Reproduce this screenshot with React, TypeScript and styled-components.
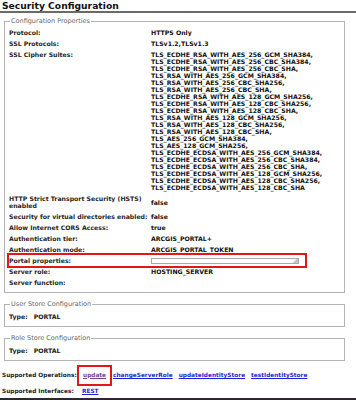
import * as React from 'react';
import styled, { createGlobalStyle } from 'styled-components';

const GlobalStyle = createGlobalStyle`
  html, body {
    margin: 0;
    padding: 0;
    background: #fff;
  }
  body {
    font-family: "DejaVu Sans", Verdana, sans-serif;
    color: #222;
  }
`;

const ciphers = [
  'TLS_ECDHE_RSA_WITH_AES_256_GCM_SHA384,',
  'TLS_ECDHE_RSA_WITH_AES_256_CBC_SHA384,',
  'TLS_ECDHE_RSA_WITH_AES_256_CBC_SHA,',
  'TLS_RSA_WITH_AES_256_GCM_SHA384,',
  'TLS_RSA_WITH_AES_256_CBC_SHA256,',
  'TLS_RSA_WITH_AES_256_CBC_SHA,',
  'TLS_ECDHE_RSA_WITH_AES_128_GCM_SHA256,',
  'TLS_ECDHE_RSA_WITH_AES_128_CBC_SHA256,',
  'TLS_ECDHE_RSA_WITH_AES_128_CBC_SHA,',
  'TLS_RSA_WITH_AES_128_GCM_SHA256,',
  'TLS_RSA_WITH_AES_128_CBC_SHA256,',
  'TLS_RSA_WITH_AES_128_CBC_SHA,',
  'TLS_AES_256_GCM_SHA384,',
  'TLS_AES_128_GCM_SHA256,',
  'TLS_ECDHE_ECDSA_WITH_AES_256_GCM_SHA384,',
  'TLS_ECDHE_ECDSA_WITH_AES_256_CBC_SHA384,',
  'TLS_ECDHE_ECDSA_WITH_AES_256_CBC_SHA,',
  'TLS_ECDHE_ECDSA_WITH_AES_128_GCM_SHA256,',
  'TLS_ECDHE_ECDSA_WITH_AES_128_CBC_SHA256,',
  'TLS_ECDHE_ECDSA_WITH_AES_128_CBC_SHA',
];

const Page = styled.div`
  height: 398px;
  border-bottom: 2px solid #2b2630;
  overflow: hidden;
`;

const Title = styled.h2`
  margin: 0;
  padding: 1px 2px 0;
  font-size: 9.2px;
  line-height: 10px;
  font-weight: bold;
  color: #111;
  border-bottom: 2px solid #6a6a6a;
`;

const Group = styled.fieldset<{ $pt?: number; $mt?: number; $pb?: number }>`
  margin: ${(p) => p.$mt ?? 6}px 0 0 4px;
  width: 341px;
  box-sizing: border-box;
  padding: ${(p) => p.$pt ?? 2}px 0 ${(p) => p.$pb ?? 4}px 4px;
  border: 1px solid #b4b4b4;
  min-width: 0;
`;

const Legend = styled.legend`
  padding: 0 1px;
  margin-left: 1px;
  font-size: 6.5px;
  line-height: 7px;
  color: #666;
`;

const Row = styled.div<{ $mark?: boolean }>`
  display: grid;
  grid-template-columns: 142px 1fr;
  padding: 2px 0;
  font-size: 6.2px;
  line-height: 7px;
  font-weight: bold;
  ${(p) =>
    p.$mark &&
    `
    width: 296px;
    outline: 2px solid #e3161b;
  `}
`;

const Label = styled.div`
  align-self: start;
  color: #262626;
`;

const Value = styled.div`
  align-self: center;
  color: #111;
`;

const PortalBox = styled.div`
  position: relative;
  width: 148px;
  height: 6px;
  border: 1px solid #a9a9a9;
  box-sizing: border-box;
  background: #fff;
`;

const Grip = styled.span`
  position: absolute;
  right: 0;
  top: 0;
  width: 6px;
  height: 4px;
  background: linear-gradient(135deg, #f4f4f4 0%, #f4f4f4 45%, #bdbdbd 55%, #cfcfcf 100%);
`;

const TypeLine = styled.div`
  display: flex;
  gap: 6px;
  padding: 2px 0;
  font-size: 6.2px;
  line-height: 7px;
  font-weight: bold;
`;

const Footer = styled.div`
  margin-top: 3px;
  padding-left: 2px;
  display: flex;
  flex-direction: column;
`;

const FootRow = styled.div`
  display: flex;
  align-items: center;
  height: ${(p: { $h: number }) => p.$h}px;
  font-size: 5.8px;
  line-height: 8px;
  font-weight: bold;
  color: #222;
  white-space: nowrap;
`;

const FootLabel = styled.span`
  width: 76px;
  flex: none;
`;

const Link = styled.a<{ $visited?: boolean; $mark?: boolean; $ml?: number }>`
  color: ${(p) => (p.$visited ? '#7b3f9a' : '#1f1fd6')};
  text-decoration: underline;
  margin-left: ${(p) => p.$ml ?? 0}px;
  margin-right: 6px;
  cursor: pointer;
  ${(p) =>
    p.$mark &&
    `
    display: inline-block;
    padding: 5px 5px 6px 5px;
    outline: 2px solid #e3161b;
    outline-offset: -1px;
    margin-right: 2px;
  `}
`;

function Prop({ label, children, mark }: { label: React.ReactNode; children?: React.ReactNode; mark?: boolean }) {
  return (
    <Row $mark={mark}>
      <Label>{label}</Label>
      <Value>{children}</Value>
    </Row>
  );
}

export default function App() {
  return (
    <Page>
      <GlobalStyle />
      <Title>Security Configuration</Title>
      <Group $mt={5}>
        <Legend>Configuration Properties</Legend>
        <Prop label="Protocol:">HTTPS Only</Prop>
        <Prop label="SSL Protocols:">TLSv1.2,TLSv1.3</Prop>
        <Prop label="SSL Cipher Suites:">
          {ciphers.map((c) => (
            <div key={c}>{c}</div>
          ))}
        </Prop>
        <Prop label="HTTP Strict Transport Security (HSTS) enabled">false</Prop>
        <Prop label="Security for virtual directories enabled:">false</Prop>
        <Prop label="Allow Internet CORS Access:">true</Prop>
        <Prop label="Authentication tier:">ARCGIS_PORTAL+</Prop>
        <Prop label="Authentication mode:">ARCGIS_PORTAL_TOKEN</Prop>
        <Prop label="Portal properties:" mark>
          <PortalBox>
            <Grip />
          </PortalBox>
        </Prop>
        <Prop label="Server role:">HOSTING_SERVER</Prop>
        <Prop label="Server function:" />
      </Group>
      <Group $pt={3} $mt={8}>
        <Legend>User Store Configuration</Legend>
        <TypeLine>
          <span>Type:</span>
          <span>PORTAL</span>
        </TypeLine>
      </Group>
      <Group $pt={3} $mt={8}>
        <Legend>Role Store Configuration</Legend>
        <TypeLine>
          <span>Type:</span>
          <span>PORTAL</span>
        </TypeLine>
      </Group>
      <Footer>
        <FootRow $h={22}>
          <FootLabel>Supported Operations:</FootLabel>
          <Link $visited $mark>update</Link>
          <Link>changeServerRole</Link>
          <Link>updateIdentityStore</Link>
          <Link>testIdentityStore</Link>
        </FootRow>
        <FootRow $h={10}>
          <FootLabel>Supported Interfaces:</FootLabel>
          <Link $ml={4}>REST</Link>
        </FootRow>
      </Footer>
    </Page>
  );
}
